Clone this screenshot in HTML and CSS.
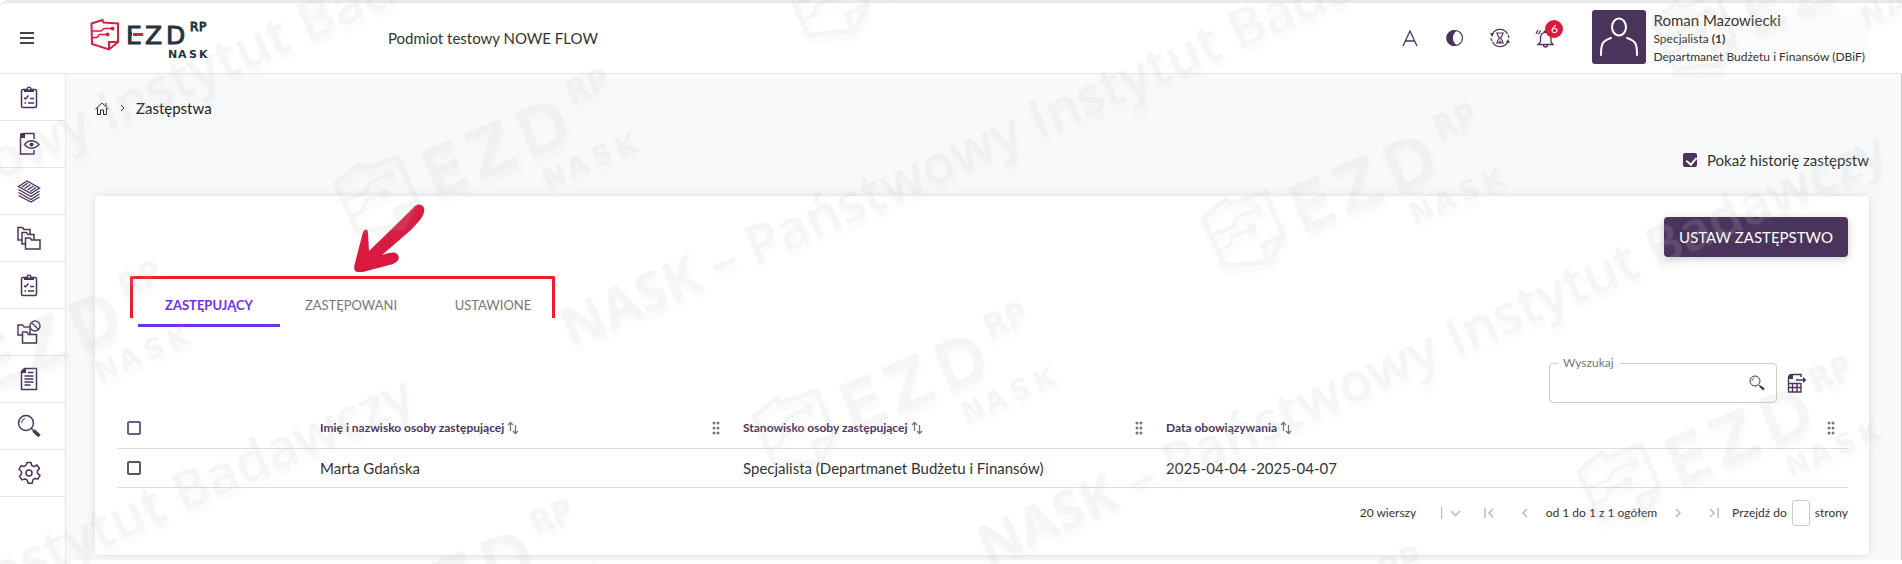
FILE: index.html
```html
<!DOCTYPE html>
<html lang="pl">
<head>
    <meta charset="UTF-8">
    <meta name="viewport" content="width=device-width, initial-scale=1.0">
    <title>EZD RP - Zastępstwa</title>
    <link rel="stylesheet" href="styles.css">
</head>
<body>

    <!-- shared icons -->
    <svg class="sprite" aria-hidden="true">
        <symbol id="logo-mark" viewBox="0 0 30 33">
            <g fill="none" stroke="currentColor" stroke-width="2">
                <path d="M1.500 5.500 L12.500 2 L13.500 4.500 L28 5.500 V24 L19 31.500 L2 26 Z"/>
                <path d="M19 31.500 V24 H28" />
                <path d="M2 13 H11 L14 10.500 H22" stroke-width="1.500"/>
                <path d="M2 19.500 H7 L9.500 16.500 H17" stroke-width="1.500"/>
            </g>
            <circle cx="22.500" cy="10.500" r="2" fill="currentColor"/>
            <circle cx="17.500" cy="16.500" r="2" fill="currentColor"/>
        </symbol>
        <symbol id="clipboard" viewBox="0 0 24 24">
            <rect x="4.500" y="4.500" width="15" height="18" rx="1.500" fill="none" stroke="currentColor" stroke-width="1.500"/>
            <path d="M7 7V4h2.500a2.500 2.500 0 0 1 5 0H17v3z" fill="currentColor"/>
            <circle cx="12" cy="3.800" r="1" fill="#fff"/>
            <path d="M7 12.500l1.500 1.500 3-3.500M13 13.500h4M7.500 18h1.500M11 18h6" fill="none" stroke="currentColor" stroke-width="1.500"/>
        </symbol>
        <symbol id="magnifier" viewBox="0 0 24 24">
            <circle cx="9" cy="9" r="7.500" fill="none" stroke="currentColor" stroke-width="1.500"/>
            <path d="M4.500 9a4.500 4.500 0 0 1 3.500-4.500" fill="none" stroke="currentColor"/>
            <path d="M14.500 14.500l2 2" stroke="currentColor" stroke-width="1.500"/>
            <path d="M16.500 16.500l6 5.500" stroke="currentColor" stroke-width="3.500"/>
        </symbol>
        <symbol id="sort" viewBox="0 0 12 14">
            <path d="M3.500 10V1.500M1 4l2.500-2.500L6 4M8.500 4v8.500M6 10l2.500 2.500L11 10" fill="none" stroke="currentColor" stroke-width="1.300"/>
        </symbol>
        <symbol id="dots" viewBox="0 0 8 14">
            <g fill="currentColor">
                <circle cx="2" cy="2" r="1.500"/><circle cx="6" cy="2" r="1.500"/>
                <circle cx="2" cy="7" r="1.500"/><circle cx="6" cy="7" r="1.500"/>
                <circle cx="2" cy="12" r="1.500"/><circle cx="6" cy="12" r="1.500"/>
            </g>
        </symbol>
        <defs>
            <g id="wm-logo">
                <use href="#logo-mark" x="91" y="18" width="30" height="33"/>
                <text class="logo-ezd" x="126 145 166" y="44">EZD</text>
                <text class="logo-rp" x="190 199" y="31">RP</text>
                <text class="logo-nask" x="168 178 189 199" y="58">NASK</text>
            </g>
        </defs>
    </svg>

    <header class="topbar">
        <button class="menu-btn" type="button" aria-label="Menu">
            <svg width="14" height="12" viewBox="0 0 14 12"><path d="M0 1h14M0 6h14M0 11h14" stroke="currentColor" stroke-width="2"/></svg>
        </button>
        <a class="logo" href="#" aria-label="EZD RP NASK">
            <svg width="122" height="44" viewBox="90 16 122 44">
                <use class="logo-red" href="#logo-mark" x="90" y="18" width="30" height="33"/>
                <text class="logo-ezd" x="126 145 166" y="44">EZD</text>
                <rect x="132" y="32" width="12" height="5" fill="#fff"/>
                <rect x="133" y="33" width="10" height="3" class="logo-bar"/>
                <text class="logo-rp" x="190 199" y="31">RP</text>
                <text class="logo-nask" x="168 178 189 199" y="58">NASK</text>
            </svg>
        </a>
        <p class="entity">Podmiot testowy NOWE FLOW</p>

        <div class="tools">
            <button type="button" aria-label="Rozmiar tekstu">
                <svg width="20" height="20" viewBox="0 0 20 20"><path d="M3 18L10 3l7 15M5.500 13h9" fill="none" stroke="currentColor" stroke-width="1.300"/></svg>
            </button>
            <button type="button" aria-label="Kontrast">
                <svg width="20" height="20" viewBox="0 0 20 20"><circle cx="10" cy="10" r="7.500" fill="none" stroke="currentColor" stroke-width="1.200"/><path d="M12 2.500a8 8 0 1 0 0 15a9 9 0 0 1 0-15z" fill="currentColor"/></svg>
            </button>
            <button type="button" aria-label="Sesja">
                <svg width="20" height="20" viewBox="0 0 20 20"><g fill="none" stroke="currentColor" stroke-width="1.200"><path d="M2 7a8.500 8.500 0 0 1 15.500-1M18 13a8.500 8.500 0 0 1-15.500 1"/><path d="M1 10a9 9 0 0 0 1 3M19 10a9 9 0 0 0-1-3"/><path d="M6 5h8M6 15h8M7.500 5v2l2 3-2 3v2M12.500 5v2l-2 3 2 3v2"/></g><path d="M0 5l4 .5-2 3.500zM20 15l-4-.5 2-3.500z" fill="currentColor"/><path d="M8.500 15l1.500-3 1.500 3z" fill="currentColor"/></svg>
            </button>
            <button class="bell" type="button" aria-label="Powiadomienia">
                <svg width="20" height="20" viewBox="0 0 20 20"><path d="M3 16.500h15l-2-2.500V9.500a5 5 0 0 0-10.500 0V14zM8.500 17a2 2 0 0 0 4 0M9 4.500a1.500 1.500 0 0 1 3 0M1 6l2-4M3.500 6.500l2-4" fill="none" stroke="currentColor" stroke-width="1.300"/></svg>
                <span class="badge">6</span>
            </button>
        </div>

        <div class="user">
            <svg class="avatar" width="54" height="54" viewBox="0 0 54 54"><g fill="none" stroke="#fff" stroke-width="2" stroke-linecap="round"><ellipse cx="27" cy="17" rx="7" ry="8.500"/><path d="M9 45c0-11 1-14 10-17M45 45c0-11-1-14-10-17"/></g></svg>
            <div class="user-text">
                <span class="user-name">Roman Mazowiecki</span>
                <span class="user-role">Specjalista <b>(1)</b></span>
                <span class="user-role">Departmanet Budżetu i Finansów (DBiF)</span>
            </div>
        </div>
    </header>

    <div class="layout">
        <nav class="sidebar" aria-label="Menu główne">
            <a href="#" aria-label="Zadania"><svg width="24" height="24"><use href="#clipboard"/></svg></a>
            <a href="#" aria-label="Podgląd">
                <svg width="24" height="24" viewBox="0 0 24 24"><g fill="none" stroke="currentColor" stroke-width="1.500"><path d="M17 7V1.500H7L3.500 5.500v16.500H17v-4"/><path d="M7.500 12.500c4-5 10-5 14.500 0c-4.500 5-10.500 5-14.500 0z"/></g><path d="M3 6V2l1-1h4v5z" fill="currentColor"/><circle cx="14.500" cy="12.500" r="2" fill="currentColor"/></svg>
            </a>
            <a href="#" aria-label="Składy">
                <svg width="24" height="24" viewBox="0 0 24 24"><g fill="none" stroke="currentColor" stroke-width="1.400"><path d="M1.500 7.500L10 2l12.500 7L14 14.500z"/><path d="M1.500 10.500L14 17.500l8.500-5.500M1.500 13.500L14 20.500l8.500-5.500M1.500 16.500L14 23l8.500-5"/><path d="M5 8l6-4M7.500 9.500l6-4M10.500 11l6-4M13 12.500l6-4"/></g></svg>
            </a>
            <a href="#" aria-label="Sprawy">
                <svg width="24" height="24" viewBox="0 0 24 24"><g fill="#fff" stroke="currentColor" stroke-width="1.500"><path d="M1 14V1.500h4.500l1.500 2h6V14z"/><path d="M5 18V6.500h4.500l1.500 2h6V18z"/><path d="M8.500 23V12H13l1.500 2h8.500v9z"/></g></svg>
            </a>
            <a href="#" aria-label="Lista"><svg width="24" height="24"><use href="#clipboard"/></svg></a>
            <a href="#" aria-label="Wykluczone">
                <svg width="24" height="24" viewBox="0 0 24 24"><g fill="#fff" stroke="currentColor" stroke-width="1.500"><path d="M1 15V5h4.500l1.500 2h6v8z"/><path d="M5.500 23V12H10l1.500 2.500h8V23z"/><circle cx="18" cy="6" r="5"/><path d="M14.500 2.500l7 7"/></g></svg>
            </a>
            <a href="#" aria-label="Dokumenty">
                <svg width="24" height="24" viewBox="0 0 24 24"><g fill="none" stroke="currentColor" stroke-width="1.500"><path d="M8 1.500h11.500v21h-15V5z"/><path d="M11 5.500h5.500M7.500 9h9M7.500 12h9M7.500 15h9M7.500 18h6"/></g><path d="M4 6V4l3-3h2v5z" fill="currentColor"/></svg>
            </a>
            <a href="#" aria-label="Szukaj"><svg width="24" height="24"><use href="#magnifier"/></svg></a>
            <a href="#" aria-label="Ustawienia">
                <svg width="24" height="24" viewBox="0 0 24 24"><g fill="none" stroke="currentColor" stroke-width="1.500" stroke-linejoin="round"><path d="M10 1.500h4l.7 3 2.300 1.200 3-1.700 2.500 3.500-2 2.300v2.600l2.500 2-2 3.600-3.200-.6-2 1.600-.6 3.200h-4l-1-3-2.200-1.200-3 .9-2.500-3.600 2-2.300v-2.500l-2.500-2 2-3.700 3.200.7 2-1.500z"/><circle cx="12" cy="12" r="3"/></g></svg>
            </a>
        </nav>

        <main class="content">
            <div class="breadcrumb">
                <a href="#" aria-label="Strona główna">
                    <svg width="14" height="13" viewBox="0 0 14 13"><path d="M.5 7L7 1l6.500 6M2.500 6v6.500h3V8h3v4.500h3V6M11 4V1" fill="none" stroke="currentColor"/></svg>
                </a>
                <svg width="5" height="8" viewBox="0 0 5 8"><path d="M1 1l3 3-3 3" fill="none" stroke="currentColor"/></svg>
                <span>Zastępstwa</span>
            </div>

            <div class="history">
                <input type="checkbox" id="historia" checked>
                <label for="historia">Pokaż historię zastępstw</label>
            </div>

            <section class="card">
                <div class="card-head">
                    <button class="btn-primary" type="button">USTAW ZASTĘPSTWO</button>
                </div>

                <div class="tabs" role="tablist">
                    <button class="tab active" type="button" role="tab" aria-selected="true">ZASTĘPUJĄCY</button>
                    <button class="tab" type="button" role="tab">ZASTĘPOWANI</button>
                    <button class="tab" type="button" role="tab">USTAWIONE</button>
                    <div class="mark-frame"></div>
                    <svg class="mark-arrow" width="74" height="70" viewBox="0 0 74 70"><path d="M63 3C67-1 74 3 72 9C71 15 65 20 60 26L30 52C37 50 42 48 45 51C49 55 46 59 41 61L11 69H6C1 69 2 64 3 60L11 29C13 25 16 26 16 30L17 48L50 16z" class="arrow-fill"/></svg>
                </div>

                <div class="filters">
                    <div class="search">
                        <label for="wyszukaj">Wyszukaj</label>
                        <input type="text" id="wyszukaj">
                        <svg width="16" height="16"><use href="#magnifier"/></svg>
                    </div>
                    <button class="export-btn" type="button" aria-label="Eksportuj">
                        <svg width="20" height="20" viewBox="0 0 20 20"><g fill="none" stroke="currentColor" stroke-width="1.400"><path d="M14 4V1.500H5L1.500 5v14h12.500V10M1.500 10.500h12.500M1.500 14.500h12.500M5.500 10.500V19M10 10.500V19M9 7h9"/></g><path d="M16 4l3.500 3-3.500 3zM1 6V3l2-2h3v5z" fill="currentColor"/></svg>
                    </button>
                </div>

                <table class="grid">
                    <colgroup>
                        <col class="col-check">
                        <col class="col-text">
                        <col class="col-text">
                        <col>
                    </colgroup>
                    <thead>
                        <tr>
                            <th><input type="checkbox" aria-label="Zaznacz wszystkie"></th>
                            <th><div class="th">Imię i nazwisko osoby zastępującej <svg width="12" height="14"><use href="#sort"/></svg><svg class="drag" width="8" height="14"><use href="#dots"/></svg></div></th>
                            <th><div class="th">Stanowisko osoby zastępującej <svg width="12" height="14"><use href="#sort"/></svg><svg class="drag" width="8" height="14"><use href="#dots"/></svg></div></th>
                            <th><div class="th">Data obowiązywania <svg width="12" height="14"><use href="#sort"/></svg><svg class="drag" width="8" height="14"><use href="#dots"/></svg></div></th>
                        </tr>
                    </thead>
                    <tbody>
                        <tr>
                            <td><input type="checkbox" aria-label="Zaznacz wiersz"></td>
                            <td>Marta Gdańska</td>
                            <td>Specjalista (Departmanet Budżetu i Finansów)</td>
                            <td>2025-04-04 -2025-04-07</td>
                        </tr>
                    </tbody>
                </table>

                <div class="pager">
                    <div class="page-size">
                        <select aria-label="Liczba wierszy">
                            <option>20 wierszy</option>
                        </select>
                        <svg width="20" height="12" viewBox="0 0 20 12"><path d="M.5 0v12M10 4l4.500 4.500L19 4" fill="none" stroke="currentColor" stroke-width="1.500"/></svg>
                    </div>
                    <button type="button" aria-label="Pierwsza"><svg width="10" height="10" viewBox="0 0 10 10"><path d="M1 0v10M9 1L5 5l4 4" fill="none" stroke="currentColor" stroke-width="1.500"/></svg></button>
                    <button type="button" aria-label="Poprzednia"><svg width="10" height="10" viewBox="0 0 10 10"><path d="M7 1L3 5l4 4" fill="none" stroke="currentColor" stroke-width="1.500"/></svg></button>
                    <span class="range">od 1 do 1 z 1 ogółem</span>
                    <button type="button" aria-label="Następna"><svg width="10" height="10" viewBox="0 0 10 10"><path d="M3 1l4 4-4 4" fill="none" stroke="currentColor" stroke-width="1.500"/></svg></button>
                    <button type="button" aria-label="Ostatnia"><svg width="10" height="10" viewBox="0 0 10 10"><path d="M9 0v10M1 1l4 4-4 4" fill="none" stroke="currentColor" stroke-width="1.500"/></svg></button>
                    <div class="goto">
                        <label for="strona">Przejdź do</label>
                        <input type="text" id="strona">
                        <span>strony</span>
                    </div>
                </div>
            </section>
        </main>
    </div>

    <!-- watermark over the whole page -->
    <svg class="watermark" aria-hidden="true">
        <g class="wm-text">
            <text transform="translate(571 348) rotate(-24)"><tspan class="wm-bold">NASK</tspan> – Państwowy Instytut Badawczy</text>
            <text transform="translate(988 566) rotate(-24)"><tspan class="wm-bold">NASK</tspan> – Państwowy Instytut Badawczy</text>
            <text transform="translate(-360 340) rotate(-24)"><tspan class="wm-bold">NASK</tspan> – Państwowy Instytut Badawczy</text>
            <text transform="translate(-485 810) rotate(-24)"><tspan class="wm-bold">NASK</tspan> – Państwowy Instytut Badawczy</text>
        </g>
        <g class="wm-logos">
            <use href="#wm-logo" transform="translate(577 102) rotate(-23) scale(2.550) translate(-192 -31)"/>
            <use href="#wm-logo" transform="translate(995 336) rotate(-23) scale(2.550) translate(-192 -31)"/>
            <use href="#wm-logo" transform="translate(541 533) rotate(-23) scale(2.550) translate(-192 -31)"/>
            <use href="#wm-logo" transform="translate(129 295) rotate(-23) scale(2.550) translate(-192 -31)"/>
            <use href="#wm-logo" transform="translate(1444 137) rotate(-23) scale(2.550) translate(-192 -31)"/>
            <use href="#wm-logo" transform="translate(1820 390) rotate(-23) scale(2.550) translate(-192 -31)"/>
            <use href="#wm-logo" transform="translate(1028 -94) rotate(-23) scale(2.550) translate(-192 -31)"/>
            <use href="#wm-logo" transform="translate(1895 -60) rotate(-23) scale(2.550) translate(-192 -31)"/>
            <use href="#wm-logo" transform="translate(1390 580) rotate(-23) scale(2.550) translate(-192 -31)"/>
        </g>
    </svg>

</body>
</html>
```
FILE: styles.css
```css
* {
    box-sizing: border-box;
}

body {
    margin: 0;
    min-height: 100vh;
    display: flex;
    flex-direction: column;
    position: relative;
    overflow: hidden;
    background-color: #fff;
    color: #333;
    font-family: Lato, "Open Sans", sans-serif;
    font-size: 15px;
    line-height: 20px;
}

button,
input,
select {
    font: inherit;
    color: inherit;
}

button {
    padding: 0;
    border: none;
    background: none;
    cursor: pointer;
}

svg {
    display: block;
    flex-shrink: 0;
}

a {
    color: inherit;
}

.sprite {
    position: absolute;
    width: 0;
    height: 0;
}

/* top bar */
.topbar {
    display: flex;
    align-items: center;
    height: 74px;
    padding: 0 33px 0 20px;
    border-top: 3px solid #eaeaea;
    border-bottom: 1px solid #e4e4e4;
    border-top-left-radius: 8px;
}

.menu-btn {
    color: #444;
}

.logo {
    margin-left: 56px;
    color: #263340;
}

.logo-red {
    color: #d91e3f;
}

.logo-bar {
    fill: #d91e3f;
}

.logo-ezd,
.logo-rp,
.logo-nask {
    font-family: "DejaVu Sans", sans-serif;
    fill: currentColor;
}

.logo-ezd {
    font-size: 25px;
    stroke: currentColor;
    stroke-width: 1px;
}

.logo-rp {
    font-size: 12px;
    stroke: currentColor;
    stroke-width: 1px;
}

.logo-nask {
    font-size: 11px;
    font-weight: bold;
}

.entity {
    margin: 0 auto 0 176px;
}

.tools {
    display: flex;
    gap: 25px;
    margin-right: 37px;
    color: #4a345c;
}

.bell {
    position: relative;
}

.badge {
    position: absolute;
    top: -8px;
    left: 10px;
    width: 18px;
    height: 18px;
    border-radius: 9px;
    background-color: #d91a3c;
    color: #fff;
    font-size: 12px;
    line-height: 18px;
}

.user {
    display: flex;
    gap: 7px;
    padding-right: 4px;
    border-radius: 4px;
    background-color: #fcfcfc;
}

.avatar {
    border-radius: 3px;
    background-color: #4a345c;
}

.user-text {
    display: flex;
    flex-direction: column;
    font-size: 12px;
    line-height: 18px;
}

.user-name {
    font-size: 15px;
    line-height: 20px;
}

/* side menu */
.layout {
    display: flex;
    flex: 1;
}

.sidebar {
    width: 66px;
    border-right: 1px solid #e8e8e8;
    color: #4a345c;
}

.sidebar a {
    display: flex;
    align-items: center;
    height: 47px;
    padding-left: 17px;
    border-bottom: 1px solid #e4e4e4;
}

/* page */
.content {
    flex: 1;
    align-self: flex-start;
    padding: 24px 32px 5px 29px;
    border-right: 1px solid #c4c4c8;
    background-color: #f8f9fb;
}

.breadcrumb {
    display: flex;
    align-items: center;
    gap: 11px;
    color: #222;
}

.history {
    display: flex;
    justify-content: flex-end;
    align-items: center;
    gap: 10px;
    margin: 32px 0 26px;
}

input[type="checkbox"] {
    appearance: none;
    display: block;
    width: 14px;
    height: 14px;
    margin: 0;
    border: 2px solid #5a5a5a;
    border-radius: 2px;
    background-color: #fff;
}

th input[type="checkbox"] {
    border-color: #715c84;
}

input[type="checkbox"]:checked {
    border-color: #4a345c;
    background-color: #4a345c;
}

input[type="checkbox"]:checked::after {
    content: "";
    display: block;
    width: 5px;
    height: 8px;
    margin-left: 3px;
    border: solid #fff;
    border-width: 0 2px 2px 0;
    transform: rotate(40deg);
}

.card {
    padding: 21px 21px 29px 22px;
    border-radius: 4px;
    background-color: #fff;
    box-shadow: 0 0 10px rgba(70, 80, 90, 0.16);
}

.card-head {
    display: flex;
    justify-content: flex-end;
}

.btn-primary {
    height: 40px;
    padding: 0 15px;
    border-radius: 4px;
    background-color: #4a345c;
    color: #fff;
    box-shadow: 0 2px 8px rgba(0, 0, 0, 0.2);
}

.tabs {
    display: flex;
    position: relative;
    margin: 28px 0 0 21px;
}

.tab {
    width: 142px;
    height: 42px;
    border-bottom: 3px solid transparent;
    color: #777;
    font-size: 13px;
}

.tab.active {
    border-color: #7030f0;
    color: #7030f0;
    font-weight: bold;
}

/* red marks drawn over the tabs */
.mark-frame {
    position: absolute;
    top: -9px;
    left: -8px;
    width: 425px;
    height: 42px;
    border: 3px solid #ec1c2a;
    border-bottom: none;
    border-radius: 2px 2px 0 0;
    pointer-events: none;
}

.mark-arrow {
    position: absolute;
    top: -82px;
    left: 214px;
    pointer-events: none;
}

.arrow-fill {
    fill: #d91a3f;
}

.filters {
    display: flex;
    justify-content: flex-end;
    align-items: center;
    gap: 10px;
    margin: 36px 41px 0 0;
}

.search {
    display: flex;
    align-items: center;
    position: relative;
    width: 228px;
    height: 40px;
    padding-right: 11px;
    border: 1px solid #ccc;
    border-radius: 4px;
    color: #4a345c;
}

.search label {
    position: absolute;
    top: -11px;
    left: 8px;
    padding: 0 5px;
    background-color: #fff;
    color: #777;
    font-size: 12px;
}

.search input {
    flex: 1;
    min-width: 0;
    height: 30px;
    border: none;
    background: none;
}

.export-btn {
    color: #4a345c;
}

/* table */
.grid {
    width: 100%;
    margin-top: 6px;
    border-collapse: collapse;
    table-layout: fixed;
}

.col-check {
    width: 193px;
}

.col-text {
    width: 423px;
}

.grid th,
.grid td {
    height: 39px;
    padding: 0 13px 0 10px;
    border-bottom: 1px solid #dcdcdc;
    text-align: left;
}

.th {
    display: flex;
    align-items: center;
    gap: 3px;
    color: #4a345c;
    font-size: 12px;
}

.th svg {
    color: #777;
}

.th .drag {
    margin-left: auto;
}

/* pager */
.pager {
    display: flex;
    justify-content: flex-end;
    align-items: center;
    height: 26px;
    margin-top: 12px;
    font-size: 12px;
}

.pager button,
.page-size svg {
    color: #bbb;
}

.pager button {
    padding: 0 13px;
}

.page-size {
    display: flex;
    align-items: center;
    margin-right: 10px;
}

.page-size select {
    appearance: none;
    width: 81px;
    padding: 0;
    border: none;
    background: none;
}

.range {
    margin: 0 3px;
}

.goto {
    display: flex;
    align-items: center;
    gap: 5px;
}

.goto input {
    width: 18px;
    height: 26px;
    padding: 0;
    border: 1px solid #ccc;
    border-radius: 3px;
}

/* watermark */
.watermark {
    position: absolute;
    top: 0;
    left: 0;
    width: 100%;
    height: 100%;
    opacity: 0.16;
    pointer-events: none;
    filter: drop-shadow(2px 6px 2px rgba(150, 150, 150, 0.3));
}

.wm-text {
    fill: #c4c4c4;
    font-family: "Open Sans", sans-serif;
    font-size: 54px;
    font-weight: 600;
}

.wm-bold {
    font-weight: 700;
}

.wm-logos {
    color: #c4c4c4;
}
```
